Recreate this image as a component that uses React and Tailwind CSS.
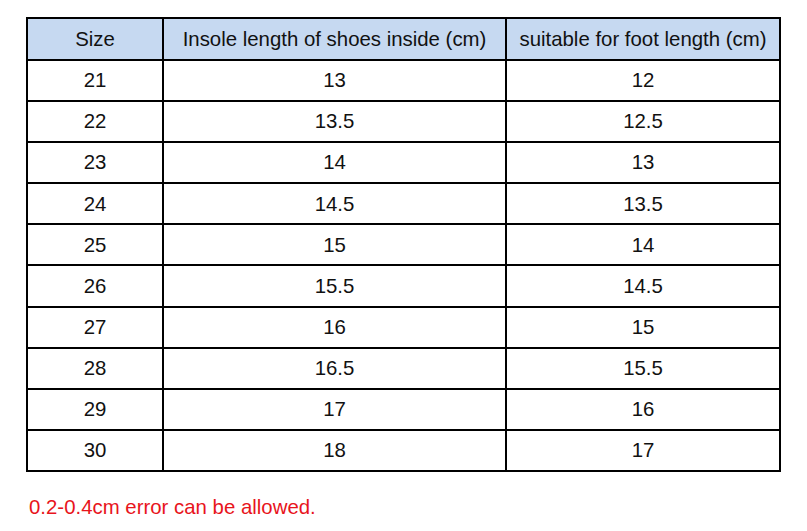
import React from "react";

const rows = [
  ["21", "13", "12"],
  ["22", "13.5", "12.5"],
  ["23", "14", "13"],
  ["24", "14.5", "13.5"],
  ["25", "15", "14"],
  ["26", "15.5", "14.5"],
  ["27", "16", "15"],
  ["28", "16.5", "15.5"],
  ["29", "17", "16"],
  ["30", "18", "17"],
];

function Row({ cells, header }) {
  const h = header ? "h-[40px] bg-[#c6d9f1]" : "h-[41.1px] bg-white border-t-2 border-black";
  return (
    <div className={`flex ${h}`}>
      <div className="w-[134px] flex items-center justify-center">{cells[0]}</div>
      <div className="w-[343px] flex items-center justify-center border-l-2 border-black">{cells[1]}</div>
      <div className="flex-1 flex items-center justify-center border-l-2 border-black">{cells[2]}</div>
    </div>
  );
}

export default function App() {
  return (
    <div
      className="w-[807px] h-[531px] bg-white pt-[17px] text-[#111]"
      style={{ fontFamily: '"Liberation Sans", Arial, sans-serif' }}
    >
      <div className="ml-[26px] w-[755px] border-2 border-black text-[20.4px]">
        <Row header cells={["Size", "Insole length of shoes inside (cm)", "suitable for foot length (cm)"]} />
        {rows.map((r) => (
          <Row key={r[0]} cells={r} />
        ))}
      </div>
      <div className="mt-[24px] ml-[29px] text-[20.4px] text-[#e8141c] leading-[23px]">
        0.2-0.4cm error can be allowed.
      </div>
    </div>
  );
}
